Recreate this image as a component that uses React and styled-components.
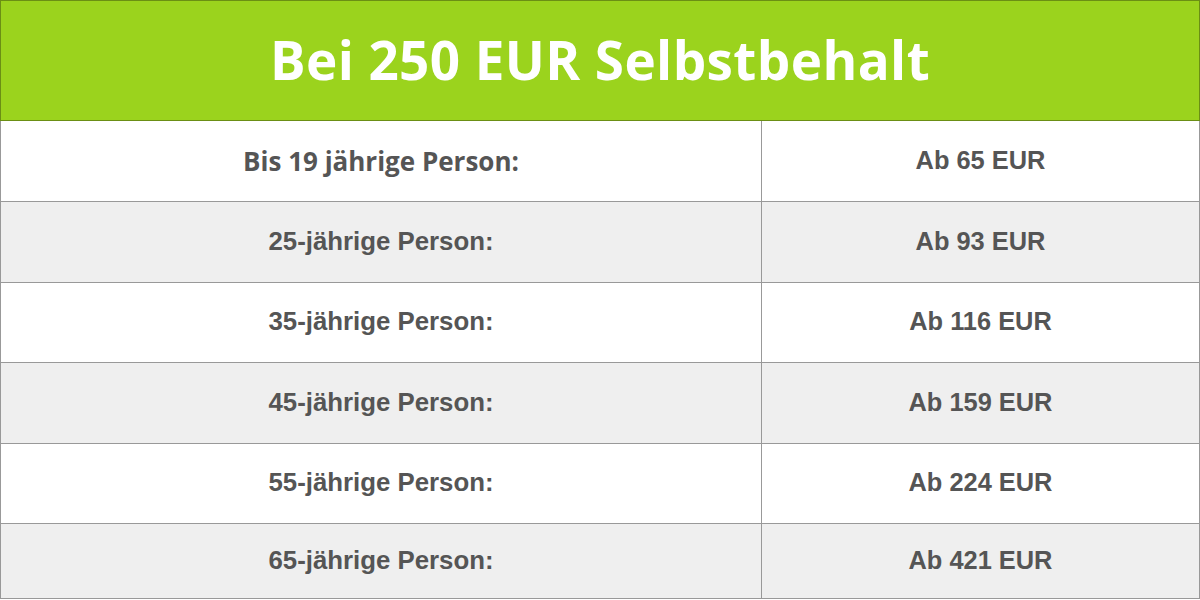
import styled, { createGlobalStyle } from "styled-components";

const rows = [
  { label: "Bis 19 jährige Person:", price: "Ab 65 EUR", first: true },
  { label: "25-jährige Person:", price: "Ab 93 EUR" },
  { label: "35-jährige Person:", price: "Ab 116 EUR" },
  { label: "45-jährige Person:", price: "Ab 159 EUR" },
  { label: "55-jährige Person:", price: "Ab 224 EUR" },
  { label: "65-jährige Person:", price: "Ab 421 EUR" },
];

export default function App() {
  return (
    <>
      <GlobalStyle />
      <Frame>
        <Header>
          <Title>Bei 250 EUR Selbstbehalt</Title>
        </Header>
        <Table>
          {rows.map((r, i) => (
            <Row key={r.label} $alt={i % 2 === 1}>
              <LabelCell $plex={r.first}>{r.label}</LabelCell>
              <PriceCell>{r.price}</PriceCell>
            </Row>
          ))}
        </Table>
      </Frame>
    </>
  );
}

// ---------------- styled-components ----------------

const GlobalStyle = createGlobalStyle`
  html, body {
    margin: 0;
    padding: 0;
    background: #fff;
  }
`;

const Frame = styled.div`
  width: 1200px;
  height: 600px;
  display: flex;
  flex-direction: column;
  box-sizing: border-box;
  overflow: hidden;
`;

const Header = styled.div`
  height: 121px;
  flex-shrink: 0;
  box-sizing: border-box;
  background: #9bd31d;
  border: 1px solid #6b8f14;
  display: flex;
  align-items: center;
  justify-content: center;
  padding-bottom: 2px;
`;

const Title = styled.h1`
  margin: 0;
  color: #fff;
  font-family: "Open Sans", "Liberation Sans", sans-serif;
  font-weight: 700;
  font-size: 53px;
  letter-spacing: 0.4px;
`;

const Table = styled.div`
  height: 478px;
  box-sizing: border-box;
  display: grid;
  grid-template-rows: repeat(5, 80.4px) 1fr;
  border-left: 1px solid #999;
  border-right: 1px solid #999;
  border-bottom: 1px solid #999;
`;

const Row = styled.div`
  display: grid;
  grid-template-columns: 761px 1fr;
  box-sizing: border-box;
  background: ${({ $alt }) => ($alt ? "#efefef" : "#fff")};
  & + & {
    border-top: 1px solid #999;
  }
`;

const Cell = styled.div`
  display: flex;
  align-items: center;
  justify-content: center;
  color: #555;
  font-weight: 700;
  font-family: "Liberation Sans", Arial, sans-serif;
`;

const LabelCell = styled(Cell)`
  border-right: 1px solid #999;
  font-family: ${({ $plex }) =>
    $plex ? '"Open Sans", "Liberation Sans", sans-serif' : '"Liberation Sans", Arial, sans-serif'};
  font-size: ${({ $plex }) => ($plex ? "26px" : "25.8px")};
  padding-bottom: ${({ $plex }) => ($plex ? "0" : "1px")};
`;

const PriceCell = styled(Cell)`
  font-size: 25.4px;
  padding-bottom: 1px;
`;
